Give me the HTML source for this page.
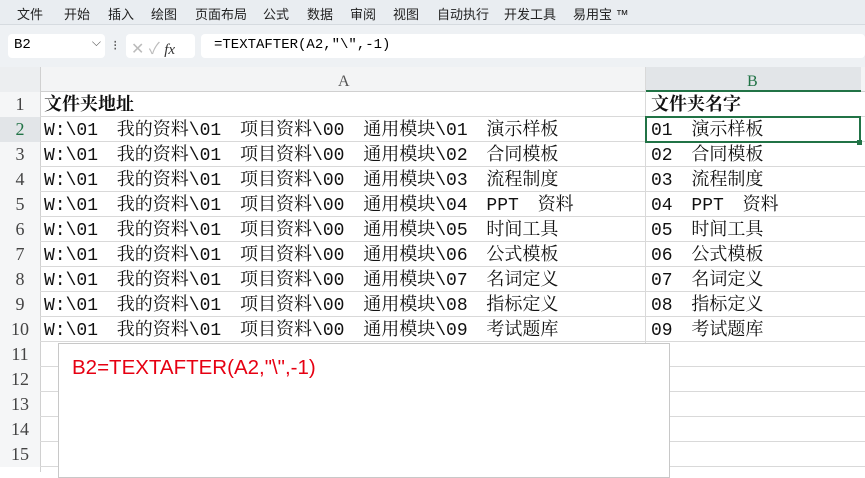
<!DOCTYPE html>
<html><head><meta charset="utf-8"><style>
*{margin:0;padding:0;box-sizing:border-box}
body{width:865px;height:472px;overflow:hidden;background:#fff;position:relative;font-family:"Liberation Sans","Noto Sans CJK SC",sans-serif}
.menu{position:absolute;left:0;top:0;width:865px;height:25px;background:#e9edf1;border-bottom:1px solid #d6dbe0;font-size:13px;color:#222}
.menu span{position:absolute;top:4px}
.fbar{position:absolute;left:0;top:25px;width:865px;height:42px;background:#eef1f4}
.box{position:absolute;background:#fff;border-radius:4px}
.cell{position:absolute;font-family:"Liberation Mono","Noto Serif CJK SC",serif;font-size:18px;color:#111;white-space:pre;line-height:25px;word-spacing:8px;margin-top:2px}
.rh{position:absolute;left:0;width:40px;text-align:center;font-family:"Liberation Serif","Noto Serif CJK SC",serif;font-size:18px;color:#444;line-height:25px;background:#f5f6f7}
.hl{position:absolute;left:40px;width:825px;height:1px;background:#d9d9d9}
</style></head><body>
<div class="menu">
<span style="left:17px">文件</span><span style="left:64px">开始</span><span style="left:108px">插入</span><span style="left:151px">绘图</span><span style="left:195px">页面布局</span><span style="left:263px">公式</span><span style="left:307px">数据</span><span style="left:350px">审阅</span><span style="left:393px">视图</span><span style="left:437px">自动执行</span><span style="left:504px">开发工具</span><span style="left:573px">易用宝 ™</span>
</div>
<div class="fbar">
<div class="box" style="left:8px;top:9px;width:97px;height:24px;font-family:'Liberation Mono',serif;font-size:14px;padding:3px 0 0 6px">B2<span style="position:absolute;right:4px;top:2px;font-size:12px;color:#555">⌵</span></div>
<div style="position:absolute;left:113px;top:12px;font-size:14px;color:#555">⁝</div>
<div class="box" style="left:126px;top:9px;width:69px;height:24px;color:#bbb;font-size:16px;padding:1px 0 0 5px">✕ ✓ <i style="color:#333;font-family:'Liberation Serif',serif;font-size:15px">fx</i></div>
<div class="box" style="left:201px;top:9px;width:664px;height:24px;font-family:'Liberation Mono','Noto Serif CJK SC',serif;font-size:14px;padding:3px 0 0 13px">=TEXTAFTER(A2,″\″,-1)</div>
</div>
<div style="position:absolute;left:0;top:67px;width:865px;height:25px;background:#f3f4f5;border-bottom:1px solid #d0d0d0"></div>
<div style="position:absolute;left:0;top:67px;width:40px;height:25px;background:#eceef0"></div>
<div style="position:absolute;left:646px;top:67px;width:215px;height:25px;background:#e2e5e8;border-bottom:2px solid #217346"></div>
<div class="cell" style="left:338px;top:67px;color:#555;font-size:16px;font-family:'Liberation Serif',serif">A</div>
<div class="cell" style="left:747px;top:67px;color:#217346;font-size:16px;font-family:'Liberation Serif',serif">B</div>
<div style="position:absolute;left:645px;top:67px;width:1px;height:405px;background:#d9d9d9"></div>
<div style="position:absolute;left:40px;top:67px;width:1px;height:405px;background:#d0d0d0"></div>
<div class="rh" style="top:92px">1</div><div class="rh" style="top:117px;color:#217346;background:#e2e5e8">2</div><div class="rh" style="top:142px">3</div><div class="rh" style="top:167px">4</div><div class="rh" style="top:192px">5</div><div class="rh" style="top:217px">6</div><div class="rh" style="top:242px">7</div><div class="rh" style="top:267px">8</div><div class="rh" style="top:292px">9</div><div class="rh" style="top:317px">10</div><div class="rh" style="top:342px">11</div><div class="rh" style="top:367px">12</div><div class="rh" style="top:392px">13</div><div class="rh" style="top:417px">14</div><div class="rh" style="top:442px">15</div>
<div class="hl" style="top:116px"></div><div class="hl" style="top:141px"></div><div class="hl" style="top:166px"></div><div class="hl" style="top:191px"></div><div class="hl" style="top:216px"></div><div class="hl" style="top:241px"></div><div class="hl" style="top:266px"></div><div class="hl" style="top:291px"></div><div class="hl" style="top:316px"></div><div class="hl" style="top:341px"></div><div class="hl" style="top:366px"></div><div class="hl" style="top:391px"></div><div class="hl" style="top:416px"></div><div class="hl" style="top:441px"></div><div class="hl" style="top:466px"></div>
<div class="cell" style="left:44px;top:92px;font-weight:bold">文件夹地址</div>
<div class="cell" style="left:651px;top:92px;font-weight:bold">文件夹名字</div>
<div class="cell" style="left:44px;top:117px">W:\01 我的资料\01 项目资料\00 通用模块\01 演示样板</div>
<div class="cell" style="left:44px;top:142px">W:\01 我的资料\01 项目资料\00 通用模块\02 合同模板</div>
<div class="cell" style="left:44px;top:167px">W:\01 我的资料\01 项目资料\00 通用模块\03 流程制度</div>
<div class="cell" style="left:44px;top:192px">W:\01 我的资料\01 项目资料\00 通用模块\04 PPT 资料</div>
<div class="cell" style="left:44px;top:217px">W:\01 我的资料\01 项目资料\00 通用模块\05 时间工具</div>
<div class="cell" style="left:44px;top:242px">W:\01 我的资料\01 项目资料\00 通用模块\06 公式模板</div>
<div class="cell" style="left:44px;top:267px">W:\01 我的资料\01 项目资料\00 通用模块\07 名词定义</div>
<div class="cell" style="left:44px;top:292px">W:\01 我的资料\01 项目资料\00 通用模块\08 指标定义</div>
<div class="cell" style="left:44px;top:317px">W:\01 我的资料\01 项目资料\00 通用模块\09 考试题库</div>
<div class="cell" style="left:651px;top:117px">01 演示样板</div>
<div class="cell" style="left:651px;top:142px">02 合同模板</div>
<div class="cell" style="left:651px;top:167px">03 流程制度</div>
<div class="cell" style="left:651px;top:192px">04 PPT 资料</div>
<div class="cell" style="left:651px;top:217px">05 时间工具</div>
<div class="cell" style="left:651px;top:242px">06 公式模板</div>
<div class="cell" style="left:651px;top:267px">07 名词定义</div>
<div class="cell" style="left:651px;top:292px">08 指标定义</div>
<div class="cell" style="left:651px;top:317px">09 考试题库</div>
<div style="position:absolute;left:645px;top:116px;width:216px;height:27px;border:2px solid #217346"></div>
<div style="position:absolute;left:857px;top:140px;width:5px;height:5px;background:#217346"></div>
<div style="position:absolute;left:58px;top:343px;width:612px;height:135px;background:#fff;border:1px solid #c8c8c8;color:#e60012;font-size:20.5px;padding:12px 0 0 13px">B2=TEXTAFTER(A2,"\",-1)</div>
</body></html>
